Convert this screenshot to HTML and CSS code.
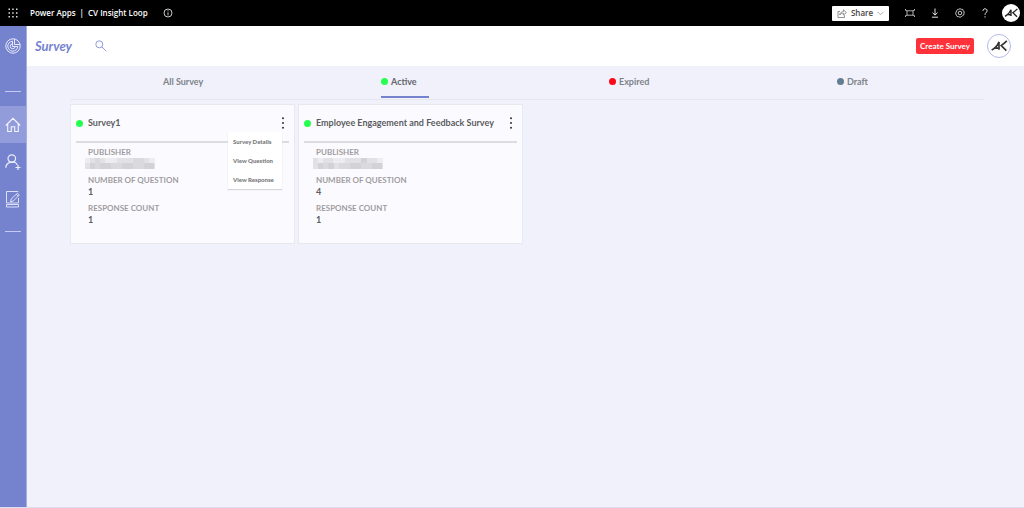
FILE: index.html
```html
<!DOCTYPE html>
<html lang="en">
<head>
<meta charset="utf-8">
<title>CV Insight Loop</title>
<link rel="stylesheet" href="styles.css">
</head>
<body>
<header class="topbar">
  <button class="icon-btn" aria-label="App launcher"><svg width="10" height="10" viewBox="0 0 10 10" fill="#ddd"><path d="M.500.500h1.500v1.500H.500zM4.200.500h1.500v1.500H4.200zM8 .500h1.500v1.500H8zM.500 4.200h1.500v1.500H.500zM4.200 4.200h1.500v1.500H4.200zM8 4.200h1.500v1.500H8zM.500 8h1.500v1.500H.500zM4.200 8h1.500v1.500H4.200zM8 8h1.500v1.500H8z"/></svg></button>
  <div class="brand"><span>Power Apps</span><span>|</span><span>CV Insight Loop</span></div>
  <button class="icon-btn info" aria-label="Information"><svg width="10" height="10" viewBox="0 0 10 10" fill="none" stroke="#ddd" stroke-width=".9"><circle cx="5" cy="5" r="4"/><path d="M5 4.400v3M5 2.400v1"/></svg></button>
  <div class="actions">
    <button class="share"><svg width="10" height="9" viewBox="0 0 10 9" fill="none" stroke="#666" stroke-width=".7"><path d="M3 2.500H1v6h6.500V6.200M2.600 6C3 3.800 4.400 2.700 6.400 2.700V.8L9.400 3.600 6.400 6V4.300C4.800 4.300 3.500 4.800 2.600 6z"/></svg><span>Share</span><svg width="7" height="5" viewBox="0 0 7 5" fill="none" stroke="#888" stroke-width=".7"><path d="M.5.8l3 3 3-3"/></svg></button>
    <button class="icon-btn" aria-label="Fit to page"><svg width="10" height="10" viewBox="0 0 10 10" fill="none" stroke="#ddd" stroke-width=".8"><path d="M2 2.800h6v4.400H2zM.5 1v1.300L2 2.800M9.500 1v1.300L8 2.800M.5 9V7.700L2 7.200M9.500 9V7.700L8 7.200"/></svg></button>
    <button class="icon-btn" aria-label="Download"><svg width="10" height="10" viewBox="0 0 10 10" fill="none" stroke="#fff" stroke-width=".9"><path d="M5 .5v6.500M2.500 4.700L5 7.100l2.500-2.400M2 9.200h6"/></svg></button>
    <button class="icon-btn" aria-label="Settings"><svg width="10" height="10" viewBox="0 0 10 10" fill="none" stroke="#ddd" stroke-width=".9"><path d="M3.700 1.300L5 .7l1.300.6 1.500.1.500 1.400 1 1.200-.4 1.400-.1 1.500-1.300.8L6.300 8.700 5 9.300l-1.300-.6-1.500-.2-.8-1.300L.7 5.800l.3-1.600.7-1.400.7-1.300z"/><circle cx="5" cy="5" r="1.800"/></svg></button>
    <button class="icon-btn" aria-label="Help"><svg width="10" height="10" viewBox="0 0 10 10" fill="none" stroke="#eee" stroke-width="1"><path d="M2.900 2.900C2.900.1 7.100.1 7.100 2.800 7.100 4.600 5 4.700 5 6.800M5 8.300v1.200"/></svg></button>
    <button class="avatar avatar-small" aria-label="Account"><svg width="18" height="18" viewBox="0 0 24 24" fill="none" stroke="#222" stroke-width="1.800"><path d="M4 16.500Q10 13 12 7.500V16M8.500 14.300H12M20.500 6.500Q17 10 14.500 11.500L20 17"/></svg></button>
  </div>
</header>
<div class="shell">
  <nav class="sidebar">
    <a class="logo" href="#" aria-label="Insights"><svg width="16" height="16" viewBox="0 0 16 16" fill="none" stroke="#e8eafa" stroke-width="1"><circle cx="8" cy="8" r="7.200"/><path d="M7.500 3.200a5 5 0 1 0 5.300 5.300H7.500zM7.500 5.800A2.500 2.500 0 1 0 10.200 8.500M9.500.900v5.600h5.600"/></svg></a>
    <hr class="nav-rule">
    <a class="nav-link current" href="#" aria-label="Home"><svg width="16" height="16" viewBox="0 0 16 16" fill="none" stroke="#f4f5ff" stroke-width="1.100"><path d="M.800 8.500L8 1.300l7.200 7.200M2.700 6.800v7.700h3.600V9.800h3.400v4.700h3.600V6.800"/></svg></a>
    <a class="nav-link" href="#" aria-label="Add person"><svg width="16" height="16" viewBox="0 0 16 16" fill="none" stroke="#eceefc" stroke-width="1.200"><circle cx="6.800" cy="4.600" r="3.800"/><path d="M.800 13.800C.900 6.700 11.800 6.500 12 11M13 11v5M10.500 13.500h5"/></svg></a>
    <a class="nav-link" href="#" aria-label="Edit survey"><svg width="16" height="18" viewBox="0 0 16 18" fill="none" stroke="#e8eafa" stroke-width=".9"><path d="M13 2V1.500H1.500v11.500h12V8M1.500 14.500h12v2.500h-12zM5.500 11.800l.9-3L12.500 3.200l1.800 1.800L8.300 11zM11.300 4.400l1.800 1.800"/></svg></a>
    <hr class="nav-rule last">
  </nav>
  <div class="page">
    <header class="page-head">
      <h1>Survey</h1>
      <button class="icon-btn" aria-label="Search"><svg width="12" height="12" viewBox="0 0 12 12" fill="none" stroke="#858fd6" stroke-width=".9"><circle cx="4.300" cy="4.300" r="3.500"/><path d="M6.900 6.900l4.400 4.300"/></svg></button>
      <button class="create">Create Survey</button>
      <button class="avatar avatar-large" aria-label="Profile"><svg width="22" height="22" viewBox="0 0 24 24" fill="none" stroke="#333" stroke-width="1.800"><path d="M4 16.500Q10 13 12 7.500V16M8.500 14.300H12M20.500 6.500Q17 10 14.500 11.500L20 17"/></svg></button>
    </header>
    <main class="content">
      <nav class="tabs">
        <a class="tab" href="#"><span class="tab-label"><i class="dot none"></i>All Survey</span></a>
        <a class="tab active" href="#"><span class="tab-label"><i class="dot green"></i>Active</span></a>
        <a class="tab" href="#"><span class="tab-label"><i class="dot red"></i>Expired</span></a>
        <a class="tab" href="#"><span class="tab-label"><i class="dot slate"></i>Draft</span></a>
      </nav>
      <section class="cards">
        <article class="card">
          <div class="card-head"><i class="dot green"></i><h2>Survey1</h2>
            <button class="more" aria-label="More options"><svg width="4" height="12" viewBox="0 0 4 12" fill="#333"><circle cx="2" cy="1.200" r="1"/><circle cx="2" cy="6" r="1"/><circle cx="2" cy="10.800" r="1"/></svg></button>
            <div class="menu"><button>Survey Details</button><button>View Question</button><button>View Response</button></div>
          </div>
          <dl>
            <dt>PUBLISHER</dt>
            <dd class="masked"><svg width="70" height="11" viewBox="0 0 70 11" shape-rendering="crispEdges"><path fill="#e2e1e6" d="M0 0h70v11H0z"/><path fill="#d3d2d6" d="M5 5h5v6H5zM15 5h11v6H15zM37 5h11v6H37zM59 5h10v6H59z"/><path fill="#dad9dd" d="M10 0h5v11h-5zM26 5h11v6H26zM48 0h11v11H48z"/><path fill="#ececf1" d="M0 0h5v5H0zM20 0h12v5H20zM64 0h6v5h-6z"/></svg></dd>
            <dt>NUMBER OF QUESTION</dt><dd>1</dd>
            <dt>RESPONSE COUNT</dt><dd>1</dd>
          </dl>
        </article>
        <article class="card">
          <div class="card-head"><i class="dot green"></i><h2>Employee Engagement and Feedback Survey</h2>
            <button class="more" aria-label="More options"><svg width="4" height="12" viewBox="0 0 4 12" fill="#333"><circle cx="2" cy="1.200" r="1"/><circle cx="2" cy="6" r="1"/><circle cx="2" cy="10.800" r="1"/></svg></button>
          </div>
          <dl>
            <dt>PUBLISHER</dt>
            <dd class="masked"><svg width="70" height="11" viewBox="0 0 70 11" shape-rendering="crispEdges"><path fill="#e2e1e6" d="M0 0h70v11H0z"/><path fill="#d3d2d6" d="M5 5h5v6H5zM15 5h6v6h-6zM37 5h11v6H37zM48 0h6v5h-6zM59 5h10v6H59z"/><path fill="#dad9dd" d="M10 5h5v6h-5zM26 5h11v6H26zM48 5h11v6H48z"/><path fill="#ececf1" d="M5 0h5v5H5zM20 0h12v5H20zM64 0h6v5h-6z"/></svg></dd>
            <dt>NUMBER OF QUESTION</dt><dd>4</dd>
            <dt>RESPONSE COUNT</dt><dd>1</dd>
          </dl>
        </article>
      </section>
    </main>
  </div>
</div>
</body>
</html>
```
FILE: styles.css
```css
* { box-sizing: border-box; }
body { margin: 0; min-height: 100vh; display: flex; flex-direction: column; background: #f1f1fb; font-family: Lato, "Liberation Sans", sans-serif; color: #5c5c60; }
button { padding: 0; border: 0; background: none; font: inherit; color: inherit; cursor: pointer; }
a { color: inherit; text-decoration: none; }
svg { display: block; flex: none; }
h1, h2, dl, dd { margin: 0; }

.topbar { display: flex; align-items: center; height: 26px; padding: 0 4px 0 8px; background: #000; color: #fff; font: 600 8px/12px "Open Sans", "Noto Sans", sans-serif; }
.icon-btn { flex: none; }
.brand { display: flex; gap: 4px; margin-left: 12px; }
.info { margin-left: 15px; }
.actions { display: flex; align-items: center; gap: 15px; margin-left: auto; }
.share { display: flex; align-items: center; justify-content: center; gap: 4px; width: 57px; height: 15px; margin-right: 1px; border-radius: 1px; background: #fff; color: #444; }
.avatar { display: grid; place-items: center; flex: none; border-radius: 50%; background: #fff; }
.avatar-small { width: 18px; height: 18px; margin-left: -3px; }
.avatar-large { width: 24px; height: 24px; border: 1px solid #b3b9e6; }

.shell { display: flex; flex: 1; border-bottom: 1px solid #dcdef2; }
.sidebar { display: flex; flex-direction: column; flex: none; width: 27px; background: #7583cf; border-right: 1px solid #a5aee2; }
.logo { display: grid; place-items: center; height: 40px; }
.nav-rule { width: 16px; height: 1px; margin: 25px auto 14px; border: 0; background: #c5caee; }
.nav-link { display: grid; place-items: center; height: 37px; }
.nav-link.current { background: #929cdb; }
.nav-rule.last { margin-top: 14px; }

.page { flex: 1; min-width: 0; }
.page-head { display: flex; align-items: center; height: 40px; padding: 0 13px 0 8px; background: #fff; }
.page-head h1 { margin-right: 23px; color: #7583cf; font-size: 13px; line-height: 16px; font-style: italic; font-weight: 700; }
.create { margin-left: auto; margin-right: 13px; width: 58px; height: 16px; border-radius: 2px; background: #ff323a; color: #fff; font-size: 8px; font-weight: 700; }

.content { padding: 0 40px 0 43px; }
.tabs { display: grid; grid-template-columns: repeat(4, 1fr); height: 34px; padding-right: 2px; border-bottom: 1px solid #e6e6ee; color: #7c8388; font-size: 9px; font-weight: 700; }
.tab { padding-left: 83px; }
.tab-label { display: flex; align-items: center; gap: 3px; width: 48px; height: 32px; border-bottom: 2px solid transparent; white-space: nowrap; }
.tab.active { color: #60666a; }
.active .tab-label { border-bottom-color: #7583cf; }
.dot { flex: none; width: 7px; height: 7px; border-radius: 50%; }
.green { background: #26ff50; }
.red { background: #ff0718; }
.slate { background: #607d92; }

.cards { display: grid; grid-template-columns: repeat(4, 1fr); gap: 3px; padding: 4px 5px 0 0; }
.card { padding: 0 5px 12px; border: 1px solid #e8e8f0; background: #fbfbff; }
.card-head { position: relative; display: flex; align-items: center; gap: 5px; height: 38px; border-bottom: 2px solid #dcdbe1; }
.card-head h2 { font-size: 9px; line-height: 12px; font-weight: 700; white-space: nowrap; }
.more { margin-left: auto; margin-right: 4px; }
.menu { position: absolute; top: 27px; right: 7px; display: flex; flex-direction: column; width: 54px; background: #fff; box-shadow: 0 1px 1px #d5d5dc; }
.menu button { height: 19px; padding-left: 5px; text-align: left; font-size: 6px; font-weight: 900; color: #77777b; white-space: nowrap; }
dl { padding: 4px 12px 0; font-size: 9px; }
dt { color: #a19c9f; font-size: 8px; line-height: 11px; font-weight: 700; }
dd { margin-bottom: 5px; line-height: 12px; font-weight: 700; }
.masked { margin-left: -3px; margin-bottom: 6px; }
```
